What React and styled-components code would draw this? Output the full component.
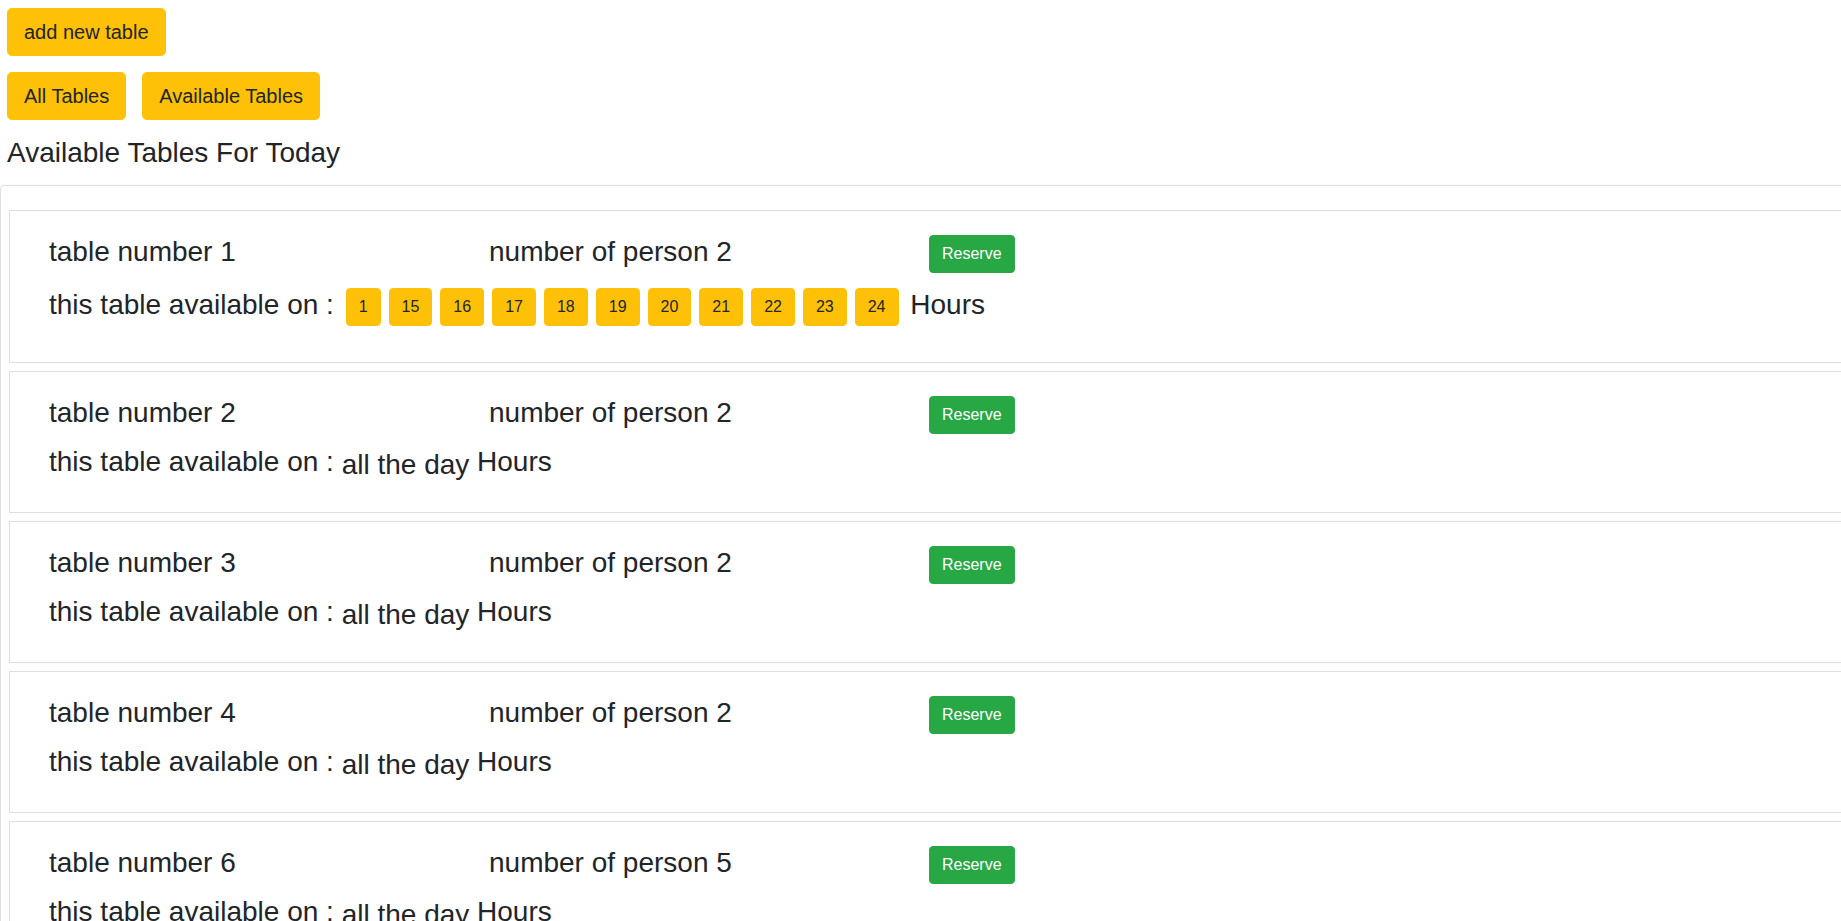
import React from 'react';
import styled, { createGlobalStyle } from 'styled-components';

const GlobalStyle = createGlobalStyle`
  *, *::before, *::after { box-sizing: border-box; }
  html, body {
    margin: 0;
    padding: 0;
    overflow: hidden;
    background: #ffffff;
  }
  body {
    font-family: "Liberation Sans", Arial, sans-serif;
    font-size: 16px;
    line-height: 1.5;
    color: #212529;
  }
`;

const Page = styled.div`
  display: flex;
  flex-direction: column;
`;

const Header = styled.div`
  display: flex;
  flex-direction: column;
  align-items: flex-start;
  gap: 16px;
  padding: 8px 0 0 7px;
`;

const ButtonRow = styled.div`
  display: flex;
  gap: 16px;
`;

const BaseButton = styled.button`
  font-family: inherit;
  font-weight: 400;
  font-size: 16px;
  line-height: 1.5;
  padding: 6px 12px;
  border-radius: 4px;
  cursor: pointer;
  white-space: nowrap;
`;

const WarningButton = styled(BaseButton)`
  background: #ffc107;
  border: 1px solid #ffc107;
  color: #212529;
`;

const LargeButton = styled(WarningButton)`
  font-size: 20px;
  padding: 8px 16px;
  border-radius: 4.8px;
`;

const HourButton = styled(WarningButton)`
  display: inline-block;
  vertical-align: middle;
  margin: 4px;
`;

const ReserveButton = styled(BaseButton)`
  display: block;
  background: #28a745;
  border: 1px solid #28a745;
  color: #ffffff;
`;

const Title = styled.h3`
  margin: 0 0 15px;
  font-size: 28px;
  line-height: 34px;
  font-weight: 400;
`;

const Board = styled.div`
  margin-right: -40px;
  border: 1px solid rgba(0, 0, 0, 0.125);
  border-radius: 4px;
  padding: 24px 0 8px 8px;
  display: flex;
  flex-direction: column;
  gap: 8px;
`;

const TableCard = styled.div`
  border: 1px solid rgba(0, 0, 0, 0.125);
  padding: 24px 0 32px 39px;
`;

const InfoRow = styled.div`
  display: flex;
  align-items: flex-start;
  margin-bottom: 11px;
`;

const InfoCell = styled.div`
  width: 440px;
  flex: none;
  font-size: 28px;
  line-height: 34px;
  white-space: nowrap;
`;

const ActionCell = styled.div`
  flex: none;
  display: flex;
  align-items: flex-start;
`;

const HoursLine = styled.div`
  font-size: 28px;
  line-height: 34px;
  white-space: nowrap;
`;

const AllDay = styled.span`
  line-height: 30px;
  vertical-align: -3px;
`;

const tables = [
  { number: 1, persons: 2, hours: [1, 15, 16, 17, 18, 19, 20, 21, 22, 23, 24] },
  { number: 2, persons: 2, hours: null },
  { number: 3, persons: 2, hours: null },
  { number: 4, persons: 2, hours: null },
  { number: 6, persons: 5, hours: null },
];

function TableItem({ table }) {
  return (
    <TableCard>
      <InfoRow>
        <InfoCell>table number {table.number}</InfoCell>
        <InfoCell>number of person {table.persons}</InfoCell>
        <ActionCell>
          <ReserveButton>Reserve</ReserveButton>
        </ActionCell>
      </InfoRow>
      <HoursLine>
        this table available on :{' '}
        {table.hours ? (
          table.hours.map((h) => <HourButton key={h}>{h}</HourButton>)
        ) : (
          <AllDay>all the day</AllDay>
        )}{' '}
        Hours
      </HoursLine>
    </TableCard>
  );
}

export default function App() {
  return (
    <Page>
      <GlobalStyle />
      <Header>
        <LargeButton>add new table</LargeButton>
        <ButtonRow>
          <LargeButton>All Tables</LargeButton>
          <LargeButton>Available Tables</LargeButton>
        </ButtonRow>
        <Title>Available Tables For Today</Title>
      </Header>
      <Board>
        {tables.map((t) => (
          <TableItem key={t.number} table={t} />
        ))}
      </Board>
    </Page>
  );
}
